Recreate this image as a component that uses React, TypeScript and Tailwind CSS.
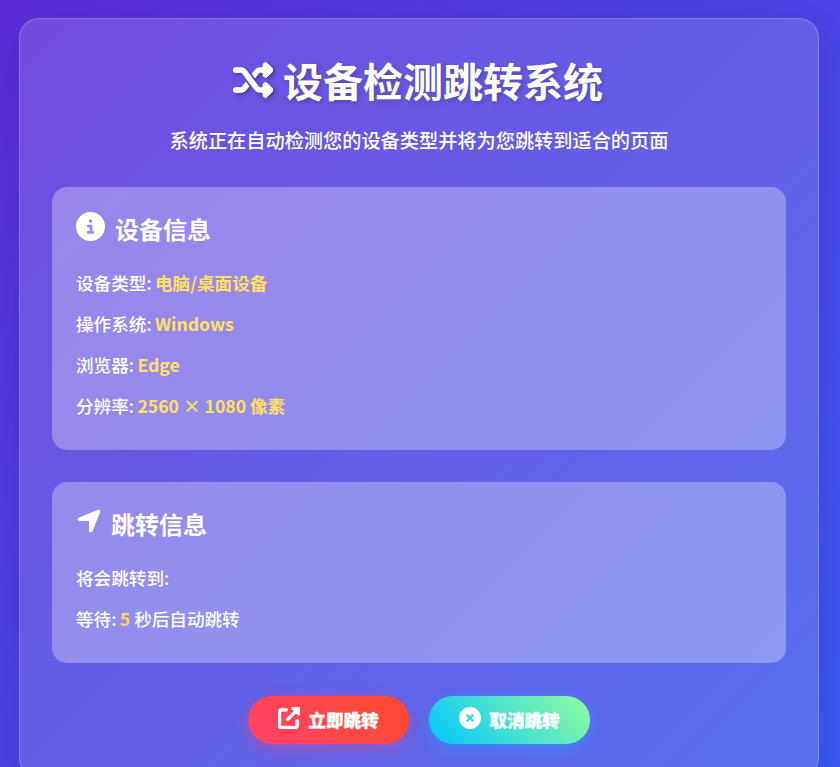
import { FaShuffle, FaCircleInfo, FaLocationArrow, FaUpRightFromSquare, FaCircleXmark } from "react-icons/fa6";

const font = { fontFamily: '"Noto Sans CJK SC", "Noto Sans", sans-serif' };

function Row({ label, value }: { label: string; value: string }) {
  return (
    <p className="text-[17.6px] leading-[26px] font-medium text-white mb-[15px] last:mb-0">
      {label}: <span className="-ml-[0.6px] font-bold text-[#ffe060]">{value}</span>
    </p>
  );
}

export default function App() {
  return (
    <div
      className="w-[840px] h-[767px] overflow-hidden pl-[19px] pt-[18px] bg-[linear-gradient(135deg,#5a2cd8_0%,#3a58f0_100%)]"
      style={font}
    >
      <div className="w-[800px] h-[760px] rounded-[20px] border border-white/20 bg-white/15 shadow-[0_8px_32px_rgba(0,0,0,0.1)] px-8 pt-[31px] text-white">
        <h1 className="flex items-center justify-center gap-[10px] pr-[2px] text-[40px] leading-[60px] font-bold [text-shadow:2px_2px_4px_rgba(0,0,0,0.2)]">
          <FaShuffle strokeWidth={10} className="w-[40px] h-[40px] drop-shadow-[2px_2px_2px_rgba(0,0,0,0.3)]" />
          <span>设备检测跳转系统</span>
        </h1>
        <p className="mt-[16px] text-center text-[19.2px] leading-[29px] font-medium">
          系统正在自动检测您的设备类型并将为您跳转到适合的页面
        </p>
        <section className="mt-[32px] rounded-[15px] bg-white/30 px-6 pt-6 h-[263px]">
          <h2 className="flex items-center gap-[10px] text-[24px] leading-[36px] font-bold mb-[23px]">
            <FaCircleInfo className="w-[29px] h-[29px] -translate-y-[3px]" />
            <span>设备信息</span>
          </h2>
          <Row label="设备类型" value="电脑/桌面设备" />
          <Row label="操作系统" value="Windows" />
          <Row label="浏览器" value="Edge" />
          <Row label="分辨率" value="2560 × 1080 像素" />
        </section>
        <section className="mt-[32px] rounded-[15px] bg-white/30 px-6 pt-6 h-[181px]">
          <h2 className="flex items-center gap-[8px] text-[24px] leading-[36px] font-bold mb-[23px]">
            <FaLocationArrow className="w-[28px] h-[28px] -ml-[1px] -translate-y-[3px]" />
            <span>跳转信息</span>
          </h2>
          <Row label="将会跳转到" value="" />
          <p className="text-[17.6px] leading-[26px] font-medium text-white">
            等待: <span className="-ml-[0.6px] font-bold text-[#ffd84f]">5</span> 秒后自动跳转
          </p>
        </section>
        <div className="mt-[33px] flex justify-center gap-5">
          <button className="flex h-[48px] w-[161px] items-center justify-center gap-2 rounded-full bg-[linear-gradient(45deg,#ff416c,#ff4b2b)] text-[17.6px] font-black [-webkit-text-stroke:0.3px_white] text-white shadow-[0_5px_15px_rgba(255,65,108,0.4)]">
            <FaUpRightFromSquare strokeWidth={20} className="w-[22px] h-[22px] -translate-y-[2px]" />
            <span>立即跳转</span>
          </button>
          <button className="flex h-[48px] w-[161px] items-center justify-center gap-2 rounded-full bg-[linear-gradient(45deg,#00c6ff,#92fe9d)] text-[17.6px] font-black [-webkit-text-stroke:0.3px_white] text-white shadow-[0_5px_15px_rgba(0,198,255,0.3)]">
            <FaCircleXmark className="w-[22px] h-[22px] -translate-y-[2px]" />
            <span>取消跳转</span>
          </button>
        </div>
      </div>
    </div>
  );
}
